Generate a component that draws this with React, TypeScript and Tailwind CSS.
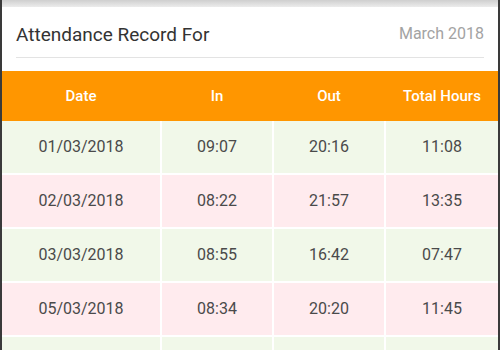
import React from "react";

const rows = [
  ["01/03/2018", "09:07", "20:16", "11:08"],
  ["02/03/2018", "08:22", "21:57", "13:35"],
  ["03/03/2018", "08:55", "16:42", "07:47"],
  ["05/03/2018", "08:34", "20:20", "11:45"],
  ["", "", "", ""],
];

export default function App() {
  return (
    <div
      className="w-[500px] h-[350px] overflow-hidden bg-[#3a3a3a] px-[2px] flex flex-col"
      style={{ fontFamily: "Roboto, 'Noto Sans', sans-serif" }}
    >
      <div className="h-[7px] bg-gradient-to-b from-[#cfcfcf] to-[#ececec] shrink-0" />
      <div className="bg-white flex flex-col flex-1 min-h-0 overflow-hidden">
        <div className="shrink-0 mx-[14px] h-[51px] flex items-end justify-between pb-[13px] border-b border-[#e3e3e3]">
          <span className="text-[19px] text-[#333] leading-none">Attendance Record For</span>
          <span className="text-[16px] text-[#a3a3a3] leading-none mb-[2px]">March 2018</span>
        </div>
        <div className="h-[13px] shrink-0" />
        <div className="shrink-0 grid grid-cols-[158px_110px_110px_112px] gap-x-[2px] bg-[#ff9600] h-[50px] items-center text-white text-[15px] font-medium">
          <div className="text-center">Date</div>
          <div className="text-center">In</div>
          <div className="text-center">Out</div>
          <div className="text-center">Total Hours</div>
        </div>
        <div className="shrink-0 flex flex-col gap-[2px] bg-white">
          {rows.map((r, i) => (
            <div key={i} className="grid grid-cols-[158px_110px_110px_112px] gap-x-[2px] h-[52px]">
              {r.map((c, j) => (
                <div
                  key={j}
                  className={`flex items-center justify-center text-[16px] text-[#4a4a4a] ${
                    i % 2 === 0 ? "bg-[#f1f8e9]" : "bg-[#ffebee]"
                  }`}
                >
                  {c}
                </div>
              ))}
            </div>
          ))}
        </div>
      </div>
    </div>
  );
}
